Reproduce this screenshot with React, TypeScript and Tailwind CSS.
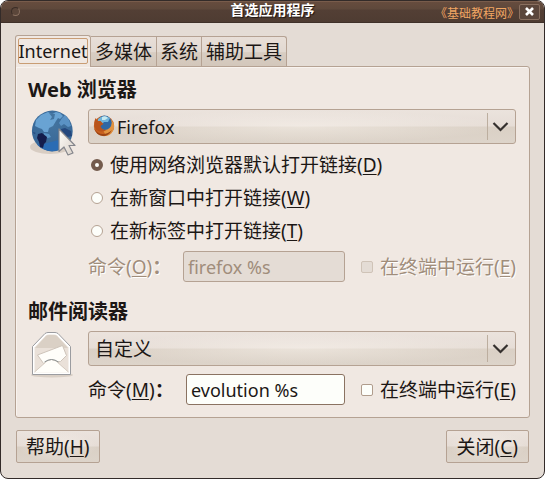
import { useState, type ReactNode } from "react";

const shell =
  "border border-[#b5a293] bg-[radial-gradient(ellipse_at_center,rgba(255,250,244,0.45)_0%,rgba(255,250,244,0)_68%),linear-gradient(#ebe3dd_0%,#e6ddd6_48%,#dad0c5_52%,#ddd4ca_100%)]";

const textBox = "h-[31px] min-w-0 flex-1 rounded-[3px] border px-1 text-[18px] outline-none";

function Globe() {
  return (
    <svg width="48" height="50" viewBox="0 0 48 50" aria-hidden="true">
      <defs>
        <radialGradient id="sea" cx="0.5" cy="0.35" r="0.65">
          <stop offset="0" stopColor="#44749f" />
          <stop offset="1" stopColor="#356596" />
        </radialGradient>
        <linearGradient id="pointer" x1="0" y1="0" x2="1" y2="1">
          <stop offset="0" stopColor="#fffefa" />
          <stop offset="1" stopColor="#d9d0c8" />
        </linearGradient>
      </defs>
      <ellipse cx="22" cy="38" rx="20" ry="7" fill="#d8cdc3" />
      <circle cx="24.300" cy="22" r="20.400" fill="url(#sea)" />
      <path d="M9 35q6 1 10-1l12-3v10q-13 4-22-6z" fill="#2a6cb4" />
      <path d="M8 11l5-5 7-3 4 2 4-2 4 1 3 3-3 3-2-1-2 3-3 5-4 2-1 4-4 0-2-3-3-1-4-2z" fill="#69a3d3" />
      <path d="M21 4l3 4-2 3 4-1 1-5z" fill="#44749f" />
      <path d="M31 14l3-5 3-3 4 5 2 6-3 1-4-3-3 2z" fill="#5a92c4" />
      <path d="M16 24l5 1 2 3-3 1-4-1z" fill="#5c97c8" />
      <path d="M10 25l4-1 5 4-1 5-2 2-1 4-3-1-1-5-2-4z" fill="#141d4c" />
      <path d="M33 20l4-1 6 3 1 5-5 1-5-4zM5 23l3 1-2 1z" fill="#24477d" />
      <path d="M31 20v22.500l5-4.500 4 8 5-2-4-7.500h6z" fill="url(#pointer)" stroke="#85868c" strokeWidth="1.200" strokeLinejoin="round" />
    </svg>
  );
}

function Envelope() {
  return (
    <svg width="48" height="50" viewBox="0 0 48 50" aria-hidden="true">
      <ellipse cx="24" cy="44" rx="21" ry="2.500" fill="#d9cfc5" />
      <path d="M4.500 15.500L17 2.500q1.500-1 3-1h7q1.500 0 3 1l12.500 13v28h-38z" fill="#fff" stroke="#9b9ca0" strokeLinejoin="round" />
      <path d="M6.500 16.500L18 4.500q1-1 3-1h5q2 0 3 1l11.500 12v25h-34z" fill="#eae1d9" />
      <path d="M7 17L18 5q1-1 3-1h5q2 0 3 1l11 12z" fill="#dad0c5" />
      <path d="M9.500 24l25-9.500 4 10-6 6-17 2z" fill="#fffefa" stroke="#cec4ba" strokeLinejoin="round" />
      <path d="M6.500 41.500L19 30q4.500-3 9 0l12.500 11.500z" fill="#fffefa" />
      <path d="M6.500 41L19 30q4.500-3 9 0l12.500 11" fill="none" stroke="#d6ccc2" />
      <path d="M16.500 31q7-5 14 0" fill="none" stroke="#8b9193" />
    </svg>
  );
}

function FirefoxMark() {
  return (
    <svg className="pointer-events-none absolute left-1 top-[5px]" width="23" height="24" viewBox="0 0 23 24" aria-hidden="true">
      <circle cx="12" cy="12" r="10.200" fill="#c8601f" />
      <path d="M17 4q6 4 5 10-2 7-8 8l-3-6z" fill="#e2933f" />
      <path d="M2 14q3 6 9 6 5 0 9-4-3 6-9 6-7-1-9-8z" fill="#9c4516" />
      <circle cx="12.500" cy="8.800" r="7.200" fill="#2f68a4" />
      <path d="M6 5q5-5 12-1l-2 4-4 0-3 3-3-1z" fill="#70b4da" />
      <path d="M10 3q4-2 6 1l-3 2-3 0z" fill="#c4e8f0" />
      <path d="M2.500 7l1-3 2 3 3 0 3 3-3 2q1 4 6 4-5 3-10 0-3-4-2-9z" fill="#b9541b" />
    </svg>
  );
}

type ComboProps = { label: string; options: string[]; mark?: ReactNode; look: string };

function Combo({ label, options, mark, look }: ComboProps) {
  return (
    <div className="relative">
      <select aria-label={label} className={`block h-[35px] w-full appearance-none rounded-[3px] pr-8 outline-none ${shell} ${look}`}>
        {options.map((option) => (
          <option key={option}>{option}</option>
        ))}
      </select>
      {mark}
      <span className="pointer-events-none absolute inset-y-1 right-0 flex w-[29px] items-center border-l border-[#bcae9f] pl-1">
        <svg width="18" height="12" viewBox="0 0 18 12" aria-hidden="true">
          <path d="M1.500 2l7 7 7-7" fill="none" stroke="#35302e" strokeWidth="2.200" />
        </svg>
      </span>
    </div>
  );
}

function Key({ children }: { children: string }) {
  return (
    <>
      (<span className="underline decoration-1 underline-offset-2">{children}</span>)
    </>
  );
}

type CommandProps = { id: string; mnemonic: string; value: string; disabled?: boolean; labelWidth: string };

function CommandRow({ id, mnemonic, value, disabled = false, labelWidth }: CommandProps) {
  const ink = disabled ? "text-[#a08d7b] [text-shadow:1px_1px_0_#fff]" : "";
  return (
    <div className={`flex items-center ${ink}`}>
      <label htmlFor={id} className={`shrink-0 whitespace-nowrap ${labelWidth}`}>
        命令<Key>{mnemonic}</Key>
        <span className="font-bold">：</span>
      </label>
      <input
        id={id}
        type="text"
        defaultValue={value}
        disabled={disabled}
        className={`${textBox} ${disabled ? "border-[#b5a293] bg-[#e4dcd5]" : "border-[#8a7261] bg-[#fdfefa]"}`}
      />
      <label className="ml-4 flex shrink-0 items-center gap-[7px] whitespace-nowrap">
        <input
          type="checkbox"
          disabled={disabled}
          className={`size-3 appearance-none rounded-[2px] border checked:bg-[#6b5142] ${disabled ? "border-[#cfc3b7] bg-[#e4dcd5]" : "border-[#b09c8c] bg-[#fdfefa]"}`}
        />
        <span>
          在终端中运行<Key>E</Key>
        </span>
      </label>
    </div>
  );
}

const tabs = [
  { name: "多媒体", pad: "px-1" },
  { name: "系统", pad: "px-[3px]" },
  { name: "辅助工具", pad: "px-1" },
];

const modes = [
  { text: "使用网络浏览器默认打开链接", key: "D" },
  { text: "在新窗口中打开链接", key: "W" },
  { text: "在新标签中打开链接", key: "T" },
];

export default function App() {
  const [mode, setMode] = useState("D");
  return (
    <main className="min-h-screen overflow-hidden rounded-lg border border-[#332b29] bg-[#e4dcd5] font-['Noto_Sans','Noto_Sans_CJK_SC',sans-serif] text-[19px] leading-7 text-[#1c1715]">
      <header className="grid h-[22px] grid-cols-[1fr_auto_1fr] items-center border-b border-[#3f312a] bg-[linear-gradient(#8a6b58_0px,#664c3e_1px,#5e483b_8px,#533f35_9px,#4e3c32_100%)] px-1">
        <button type="button" aria-label="菜单" className="ml-1.5 size-[9px] rounded-full border border-[#3a2d27] border-b-[#8b7161] border-r-[#8b7161] bg-[#5b463a]" />
        <h1 className="pb-1 text-[14px] font-bold leading-4 text-white [text-shadow:1px_1px_1px_#1e1511]">首选应用程序</h1>
        <div className="flex items-center justify-end">
          <span className="mt-1 whitespace-nowrap text-[12px] leading-4 text-[#f1a663]">《基础教程网》</span>
          <button type="button" aria-label="关闭" className="flex h-4 w-[21px] items-center justify-center rounded-[2px] border border-[#8a7060] bg-[#5b463b]">
            <svg width="9" height="9" viewBox="0 0 9 9" aria-hidden="true">
              <path d="M1 1l7 7M8 1L1 8" stroke="#fff" strokeWidth="2.600" />
            </svg>
          </button>
        </div>
      </header>

      <div className="px-[14px] pb-[14px] pt-3">
        <div role="tablist" className="flex items-end">
          <button
            type="button"
            role="tab"
            aria-selected="true"
            className="relative z-10 -mb-px h-8 w-[76px] rounded-t-[3px] border border-b-0 border-[#b5a293] bg-[#f0e8e2] px-0.5 pb-1 pt-0.5"
          >
            <span className="flex h-[26px] items-center justify-center rounded-[2px] border border-[#c99d74] text-[18px]">Internet</span>
          </button>
          {tabs.map((tab) => (
            <button
              key={tab.name}
              type="button"
              role="tab"
              aria-selected="false"
              className={`h-[30px] border border-b-0 border-l-0 border-[#b5a293] bg-[linear-gradient(#e8dfd8_0%,#e2d9d1_50%,#d8cdc2_54%,#d3c7bb_100%)] last:rounded-tr-[3px] ${tab.pad}`}
            >
              {tab.name}
            </button>
          ))}
        </div>

        <div role="tabpanel" className="rounded-[3px] rounded-tl-none border border-[#b5a293] bg-[#f0e8e2] pb-3 pl-3 pr-[13px] pt-[9px] shadow-[inset_1px_1px_0_#f8f3ef]">
          <section>
            <h2 className="text-[20px] font-bold">Web 浏览器</h2>
            <div className="mt-[5px] flex">
              <div className="w-[60px] shrink-0">
                <Globe />
              </div>
              <div className="min-w-0 flex-1">
                <Combo label="Web 浏览器" options={["Firefox", "自定义"]} mark={<FirefoxMark />} look="pl-7 text-[18px]" />
                <div className="my-1">
                  {modes.map((item) => (
                    <label key={item.key} className="flex h-[33px] items-center gap-[7px] pl-[3px]">
                      <input
                        type="radio"
                        name="open-mode"
                        checked={mode === item.key}
                        onChange={() => setMode(item.key)}
                        className="size-3 appearance-none rounded-full border border-[#b5a293] bg-[#fdfefa] checked:border-4 checked:border-[#735b4d]"
                      />
                      <span>
                        {item.text}
                        <Key>{item.key}</Key>
                      </span>
                    </label>
                  ))}
                </div>
                <CommandRow id="web-command" mnemonic="O" value="firefox %s" disabled labelWidth="w-[95px]" />
              </div>
            </div>
          </section>

          <section className="mt-4">
            <h2 className="text-[20px] font-bold">邮件阅读器</h2>
            <div className="mt-[5px] flex">
              <div className="w-[60px] shrink-0">
                <Envelope />
              </div>
              <div className="flex min-w-0 flex-1 flex-col gap-2">
                <Combo label="邮件阅读器" options={["自定义", "Evolution"]} look="pl-1.5" />
                <CommandRow id="mail-command" mnemonic="M" value="evolution %s" labelWidth="w-[98px]" />
              </div>
            </div>
          </section>
        </div>

        <footer className="flex justify-between px-px pt-3">
          <button type="button" className={`h-[33px] rounded-[2px] px-[9px] ${shell}`}>
            帮助<Key>H</Key>
          </button>
          <button type="button" className={`h-[33px] rounded-[2px] px-[10px] ${shell}`}>
            关闭<Key>C</Key>
          </button>
        </footer>
      </div>
    </main>
  );
}
